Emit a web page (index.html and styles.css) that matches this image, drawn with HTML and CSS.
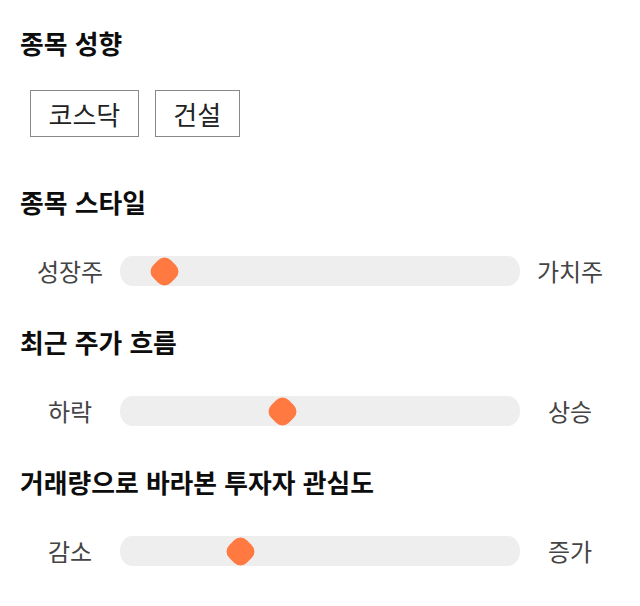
FILE: index.html
```html
<!DOCTYPE html>
<html lang="ko">
<head>
<meta charset="utf-8">
<link rel="stylesheet" href="styles.css">
</head>
<body>
<div class="page">
  <section class="section section-tags">
    <h2 class="title">종목 성향</h2>
    <div class="tags">
      <span class="tag">코스닥</span>
      <span class="tag">건설</span>
    </div>
  </section>
  <section class="section">
    <h2 class="title">종목 스타일</h2>
    <div class="scale">
      <span class="label">성장주</span>
      <div class="track"><span class="thumb" style="left: 7.5%"></span></div>
      <span class="label">가치주</span>
    </div>
  </section>
  <section class="section">
    <h2 class="title">최근 주가 흐름</h2>
    <div class="scale">
      <span class="label">하락</span>
      <div class="track"><span class="thumb" style="left: 37.1%"></span></div>
      <span class="label">상승</span>
    </div>
  </section>
  <section class="section">
    <h2 class="title">거래량으로 바라본 투자자 관심도</h2>
    <div class="scale">
      <span class="label">감소</span>
      <div class="track"><span class="thumb" style="left: 26.4%"></span></div>
      <span class="label">증가</span>
    </div>
  </section>
</div>
</body>
</html>
```
FILE: styles.css
```css
html, body {
  margin: 0;
  padding: 0;
  background: #fff;
}
body {
  font-family: "Noto Sans CJK KR", "Noto Sans", sans-serif;
  color: #111;
}
.page {
  padding: 24px 20px 0;
  display: flex;
  flex-direction: column;
  gap: 37px;
}
.section {
  display: flex;
  flex-direction: column;
}
.section-tags {
  margin-bottom: 9px;
}
.title {
  margin: 0;
  font-size: 25.8px;
  line-height: 38px;
  font-weight: 700;
  color: #0d0d0d;
}
.tags {
  display: flex;
  gap: 16px;
  margin: 28px 0 0 10px;
}
.tag {
  box-sizing: border-box;
  height: 47px;
  padding: 0 17.5px;
  border: 1px solid #888;
  display: flex;
  align-items: center;
  font-size: 26px;
  color: #222;
}
.scale {
  display: flex;
  align-items: center;
  margin-top: 35px;
}
.label {
  width: 100px;
  text-align: center;
  font-size: 24px;
  line-height: 30px;
  color: #444;
}
.track {
  flex: 1;
  height: 30px;
  background: #eeeeee;
  border-radius: 12px / 15px;
  position: relative;
}
.thumb {
  position: absolute;
  top: 50%;
  width: 25px;
  height: 25px;
  margin-top: -12.5px;
  margin-left: 2px;
  background: #ff7940;
  border-radius: 9px;
  transform: rotate(45deg);
}
```
